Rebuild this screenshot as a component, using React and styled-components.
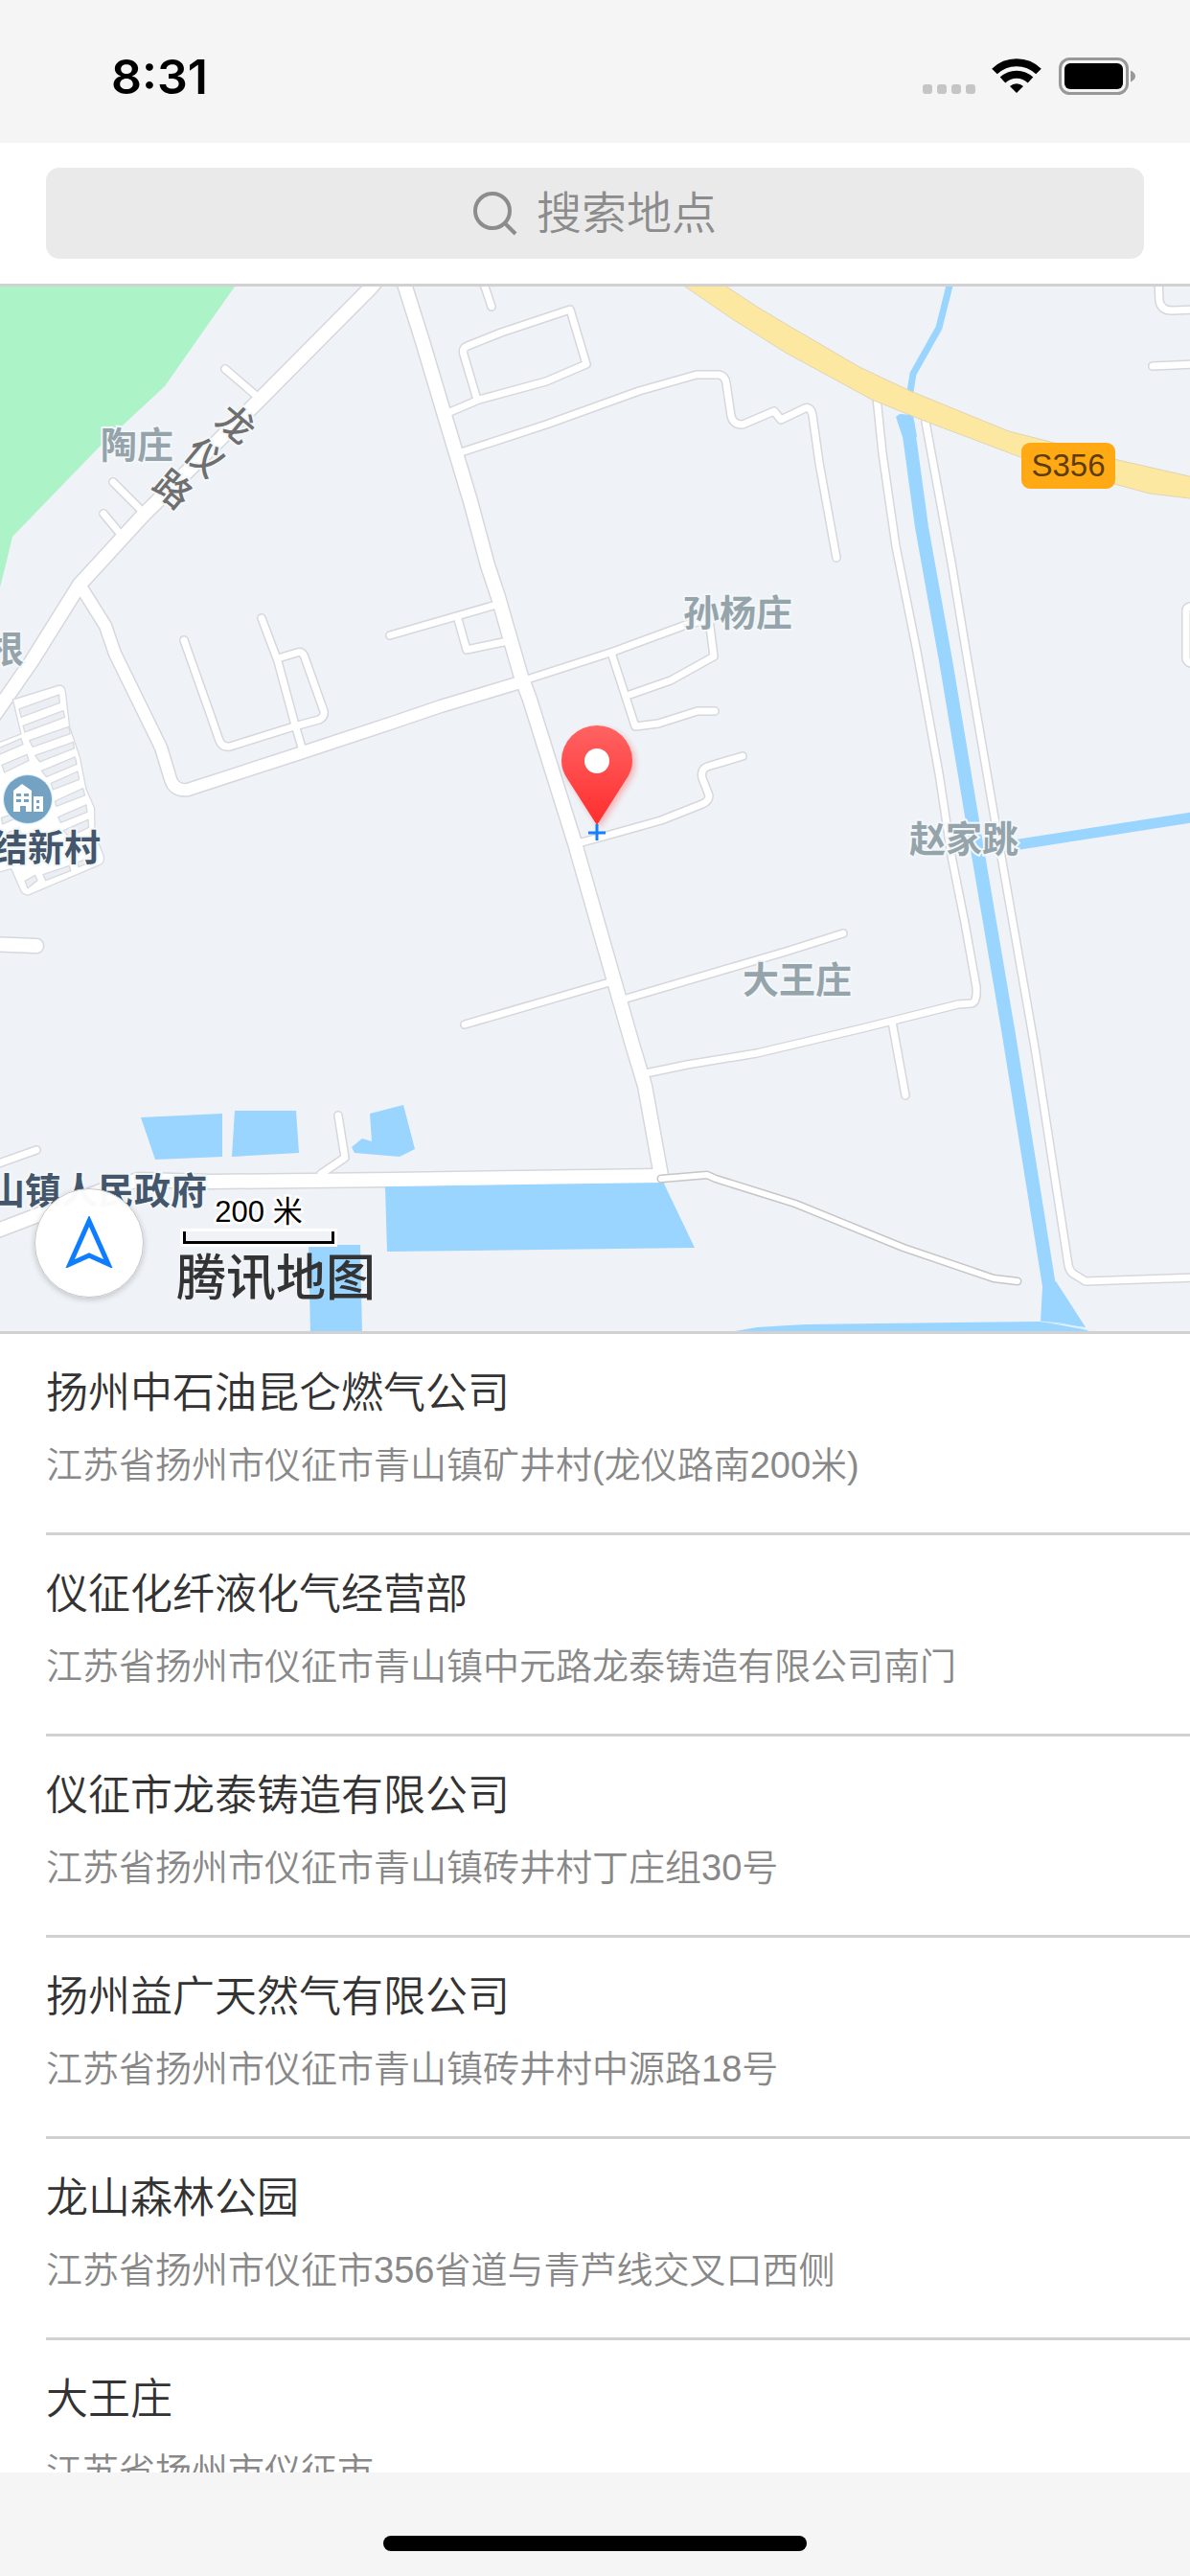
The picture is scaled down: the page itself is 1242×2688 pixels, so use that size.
import React, { useState } from "react";
import styled, { createGlobalStyle } from "styled-components";

const places = [
    { name: '扬州中石油昆仑燃气公司', address: '江苏省扬州市仪征市青山镇矿井村(龙仪路南200米)' },
    { name: '仪征化纤液化气经营部', address: '江苏省扬州市仪征市青山镇中元路龙泰铸造有限公司南门' },
    { name: '仪征市龙泰铸造有限公司', address: '江苏省扬州市仪征市青山镇砖井村丁庄组30号' },
    { name: '扬州益广天然气有限公司', address: '江苏省扬州市仪征市青山镇砖井村中源路18号' },
    { name: '龙山森林公园', address: '江苏省扬州市仪征市356省道与青芦线交叉口西侧' },
    { name: '大王庄', address: '江苏省扬州市仪征市' }
]

const villages = [
    { name: '陶庄', x: 105, y: 146 },
    { name: '根', x: -13, y: 359 },
    { name: '孙杨庄', x: 713, y: 321 },
    { name: '赵家跳', x: 949, y: 557 },
    { name: '大王庄', x: 775, y: 704 }
]

const landmarks = [
    { name: '结新村', x: -9, y: 566 },
    { name: '山镇人民政府', x: -12, y: 924 }
]

const roadName = [
    { name: '龙', x: 226, y: 124 },
    { name: '仪', x: 193, y: 159 },
    { name: '路', x: 160, y: 192 }
]

// map geometry, in screen pixels
const wideRoads = [
    'M395 290 L388 299 L270 418 L150 537 L83 610 L33 690 L-10 752',
    'M420 290 L440 353 L463 430 L476 473 L491 523 L509 590 L520 623 L543 703 L553 730 L600 880 L640 1020 L660 1090 L673 1133 L690 1227',
    'M690 1227 L410 1231 L220 1233 L145 1231 L110 1241 L0 1283 L-10 1287',
    'M-10 985 L38 987'
]

const midRoads = [
    'M83 610 L110 653 L120 682 L168 780 L178 813 Q182 826 196 824 L310 787 L410 754 L460 737 L543 712'
]

const lanes = [
    'M235 385 L270 415',
    'M118 503 L150 535',
    'M108 536 L128 560',
    'M192 668 L220 747 L229 773 Q232 780 240 779 L307 758 L333 751 Q339 748 338 742 L318 686 Q316 679 310 681 L290 687',
    'M273 645 L290 690 L307 753 L315 780',
    'M503 290 L513 320',
    'M498 417 L484 370 Q482 363 488 361 L523 347 L595 323 L612 380 L570 398 L500 417 L467 431',
    'M478 473 L570 443 L667 408 L727 391 L750 391 Q757 392 758 400 L763 434 Q765 443 775 443 L808 429 L815 438 L840 426 Q846 424 848 433 L855 483 L873 582',
    'M407 663 L518 631',
    'M478 646 L487 678 L530 669',
    'M550 709 L640 680 L716 652 L740 646 L745 685 L700 710 L657 725',
    'M638 681 L663 758 L687 755 L728 742 L746 742',
    'M775 789 L738 800 Q731 803 733 812 L740 830 Q740 836 733 839 L690 856 L633 872 L603 880',
    'M485 1069 L636 1025',
    'M650 1043 L820 993 L880 974',
    'M674 1120 L717 1111 L790 1099 L900 1073 L1000 1048 L1014 1047 Q1020 1046 1019 1030 L1007 963 L993 893 L980 807 L957 680 L935 570 L921 473 L915 415',
    'M931 1066 L945 1143',
    'M966 440 L993 587 L1010 690 L1040 865 L1080 1093 L1115 1320 Q1116 1326 1120 1329 L1133 1337 L1250 1333',
    'M353 1164 L360 1208 L335 1225',
    'M38 1200 L-10 1217',
    'M1209 290 L1210 314 Q1212 324 1223 324 L1250 323',
    'M1203 382 L1250 380',
    'M1238 637 Q1238 632 1250 632 M1238 637 L1238 686 Q1238 693 1250 693'
]

const track = 'M690 1230 L738 1226 L747 1230 L830 1256 L943 1302 L1037 1334 L1062 1337'

const ponds = [
    '147,1166 232,1162 232,1207 162,1210',
    '245,1159 309,1159 312,1203 242,1207',
    '386,1162 421,1153 433,1199 417,1207 370,1203 367,1197 378,1188 388,1191',
    '402,1238 692,1233 725,1302 404,1306',
    '322,1299 376,1299 378,1392 324,1392',
    '750,1392 790,1385 840,1382 1087,1379 1130,1387 1148,1392',
    '1088,1343 1102,1337 1133,1385 1086,1379'
]

// housing blocks of the village on the left edge, in thirds of a pixel
const blocks = [
    '60,180 185,135 187,160 66,205',
    '72,232 198,185 203,205 78,252',
    '92,278 215,235 220,257 102,298',
    '110,325 230,283 232,303 125,345',
    '130,373 235,330 240,352 145,392',
    '160,412 243,375 248,400 166,432',
    '172,468 260,428 266,450 176,484',
    '182,518 270,480 273,502 190,535',
    '198,560 276,526 278,550 215,580',
    '135,698 217,670 221,686 143,716',
    '78,718 110,700 117,716 87,740',
    '242,660 285,643 290,655 246,674',
    '-9,305 66,272 72,290 -9,325',
    '6,355 84,322 90,341 14,378',
    '4,520 40,508 44,524 8,540',
    '-9,580 60,552 66,570 -9,600'
]

const MapDrawing = () => (
    <MapCanvas viewBox="0 299 1242 1090" preserveAspectRatio="xMidYMid slice" aria-hidden="true">
        <polygon points="0,290 251,290 245,299 207,353 172,403 130,442 103,467 13,560 7,585 0,613" fill="#adf3c8" />
        <g fill="none" stroke="#d5d7dc" strokeLinecap="round" strokeLinejoin="round">
            {wideRoads.map((d) => <path key={d} d={d} strokeWidth="17" />)}
            {midRoads.map((d) => <path key={d} d={d} strokeWidth="15" />)}
            {lanes.map((d) => <path key={d} d={d} strokeWidth="10" />)}
        </g>
        <g fill="#99d5ff">
            {ponds.map((points) => <polygon key={points} points={points} />)}
            <polygon points="935,435 939,432 953,433 957,456 942,456" />
        </g>
        <g fill="none" stroke="#99d5ff">
            <path d="M993 290 L980 342 L953 390 L949 415" strokeWidth="7" strokeLinejoin="round" />
            <path d="M947 440 L962 550 L988 695 L1015 857 L1053 1080 L1095 1342" strokeWidth="14" />
            <path d="M1045 884 L1250 852" strokeWidth="11" />
        </g>
        <path d="M1086 1379 L1108 1381 L1135 1387" fill="none" stroke="#d5efff" strokeWidth="1" />
        <g fill="none" stroke="#fff" strokeLinecap="round" strokeLinejoin="round">
            {wideRoads.map((d) => <path key={d} d={d} strokeWidth="14" />)}
            {midRoads.map((d) => <path key={d} d={d} strokeWidth="12" />)}
            {lanes.map((d) => <path key={d} d={d} strokeWidth="7" />)}
        </g>
        <g fill="none" strokeLinecap="round" strokeLinejoin="round">
            <path d={track} stroke="#c6c6c6" strokeWidth="9" />
            <path d={track} stroke="#fff" strokeWidth="6" />
        </g>
        <path
            d="M697 287 L715 299 L763 332 L820 368 L910 417 L967 440 L1065 477 L1163 505 L1200 515 L1250 521 L1250 499 L1167 480 L1100 462 L1053 450 L950 408 L897 383 L820 338 L790 320 L740 287 Z"
            fill="#fde8a2"
            stroke="#dfd4b4"
            strokeWidth="1"
        />
        <g transform="translate(0 680) scale(0.3333)" stroke="#d8dadf" strokeWidth="4" strokeLinejoin="round">
            <path d="M40 150 L185 105 Q203 105 205 125 L218 235 L250 330 L270 430 L296 490 L297 570 L325 640 Q328 662 312 668 L90 762 Q76 764 66 750 L35 680 L-20 695 L-20 290 L66 258 Z" fill="#fff" />
            {blocks.map((points) => <polygon key={points} points={points} fill="#ebeff4" />)}
        </g>
        <circle cx="29" cy="834" r="26" fill="#d9eefa" />
        <circle cx="29" cy="834" r="25" fill="#74a2c2" />
        <path d="M14 847 V825 L23 818 L33 825 V847 H27 V841 H21 V847 Z M35 831 H45 V847 H35 Z" fill="#fff" />
        <path d="M17 828 h5 v3 h-5 z M25 828 h5 v3 h-5 z M17 834 h5 v3 h-5 z M25 834 h5 v3 h-5 z M38 835 h3 v3 h-3 z M38 841 h3 v3 h-3 z" fill="#74a2c2" />
    </MapCanvas>
)

const Pin = () => (
    <PinDrawing viewBox="0 0 92 112" aria-hidden="true">
        <defs>
            <linearGradient id="pinFill" x1="0" y1="0" x2="0" y2="1">
                <stop offset="0" stopColor="#ff6363" />
                <stop offset="1" stopColor="#ff2d2d" />
            </linearGradient>
        </defs>
        <path className="body" d="M46 88 L16 41 Q9 31 9 21 A37 37 0 0 1 83 21 Q83 31 76 41 Z" fill="url(#pinFill)" />
        <circle cx="46" cy="21" r="13" fill="#fff" />
        <path d="M46 87 V104 M37 96 H55" stroke="#1480ff" strokeWidth="3" />
    </PinDrawing>
)

const StatusIcons = () => (
    <StatusDrawing viewBox="0 0 222 40" aria-label="status">
        <g fill="#c5c5c5">
            <rect x="0" y="28" width="10" height="10" rx="3" />
            <rect x="15" y="28" width="10" height="10" rx="3" />
            <rect x="30" y="28" width="10" height="10" rx="3" />
            <rect x="45" y="28" width="10" height="10" rx="3" />
        </g>
        <g fill="none" stroke="#000" strokeWidth="8">
            <path d="M75 14.500 A33 33 0 0 1 121 14.500" />
            <path d="M83.500 23.500 A21 21 0 0 1 112.500 23.500" />
        </g>
        <path d="M98 37 L91 30 A10.500 10.500 0 0 1 105 30 Z" fill="#000" />
        <rect x="143.500" y="1.500" width="70" height="36" rx="10" fill="none" stroke="#989898" strokeWidth="3" />
        <rect x="148" y="6" width="61" height="27" rx="6" fill="#000" />
        <path d="M217 13.500 Q222 16 222 19.500 Q222 23 217 25.500 Z" fill="#989898" />
    </StatusDrawing>
)

const App = () => {

    const [keyword, setKeyword] = useState('')

    return (
        <Screen>
            <GlobalStyle />
            <StatusBar>
                <Clock>8:31</Clock>
                <StatusIcons />
            </StatusBar>
            <SearchBar>
                <SearchField>
                    <SearchIcon viewBox="0 0 46 46" aria-hidden="true">
                        <circle cx="20" cy="20" r="18" />
                        <path d="M33 33 L44 44" />
                    </SearchIcon>
                    <SearchInput
                        aria-label="搜索地点"
                        placeholder="搜索地点"
                        value={keyword}
                        onChange={e => setKeyword(e.target.value)}
                    />
                </SearchField>
            </SearchBar>
            <MapArea>
                <MapDrawing />
                {villages.map((label) =>
                    <MapLabel key={label.name} $x={label.x} $y={label.y}>{label.name}</MapLabel>
                )}
                {landmarks.map((label) =>
                    <Landmark key={label.name} $x={label.x} $y={label.y}>{label.name}</Landmark>
                )}
                {roadName.map((label) =>
                    <RoadLabel key={label.name} $x={label.x} $y={label.y}>{label.name}</RoadLabel>
                )}
                <RoadBadge>S356</RoadBadge>
                <Pin />
                <LocateButton aria-label="定位">
                    <svg viewBox="0 0 50 54" width="50" height="54" aria-hidden="true">
                        <path d="M25 5 L5 50 L25 41 L45 50 Z" fill="none" stroke="#0f7dff" strokeWidth="5" strokeLinejoin="miter" />
                    </svg>
                </LocateButton>
                <MapCredits>
                    <ScaleText>200 米</ScaleText>
                    <ScaleBar />
                    <MapBrand>腾讯地图</MapBrand>
                </MapCredits>
            </MapArea>
            <PlaceList>
                {places.map((place) =>
                    <PlaceItem key={place.name}>
                        <PlaceButton>
                            <PlaceName>{place.name}</PlaceName>
                            <PlaceAddress>{place.address}</PlaceAddress>
                        </PlaceButton>
                    </PlaceItem>
                )}
            </PlaceList>
            <HomeBar>
                <HomeIndicator />
            </HomeBar>
        </Screen>
    )
}

export default App

const GlobalStyle = createGlobalStyle`
    * {
        box-sizing: border-box;
    }
    body {
        margin: 0;
        background: white;
        font-family: "Liberation Sans", "Noto Sans CJK SC", sans-serif;
    }
    button, input {
        font-family: inherit;
    }
`

const Screen = styled.div`
    height: 100vh;
    display: flex;
    flex-direction: column;
    overflow: hidden;
`

const StatusBar = styled.header`
    flex: none;
    height: 149px;
    padding: 10px 57px 0 116px;
    display: flex;
    align-items: center;
    justify-content: space-between;
    background: #f5f5f5;
`

const Clock = styled.div`
    font-family: Inter, sans-serif;
    font-size: 50px;
    line-height: 60px;
    font-weight: 600;
    color: black;
`

const StatusDrawing = styled.svg`
    width: 222px;
    height: 40px;
`

const SearchBar = styled.div`
    flex: none;
    padding: 26px 48px;
`

const SearchField = styled.label`
    height: 95px;
    display: flex;
    align-items: center;
    justify-content: center;
    gap: 20px;
    border-radius: 14px;
    background: #eaeaea;
`

const SearchIcon = styled.svg`
    width: 46px;
    height: 46px;
    fill: none;
    stroke: #8c8c8c;
    stroke-width: 4px;
`

const SearchInput = styled.input`
    width: 188px;
    padding: 0;
    border: none;
    outline: none;
    background: none;
    font-size: 47px;
    line-height: 60px;
    font-weight: 350;
    color: #333333;
    &::placeholder {
        color: #8c8c8c;
        opacity: 1;
    }
`

const MapArea = styled.section`
    flex: none;
    position: relative;
    height: 1096px;
    overflow: hidden;
    border-top: 3px solid #d1d1d1;
    border-bottom: 3px solid #d1d1d1;
    background: #eff3f8;
`

const MapCanvas = styled.svg`
    display: block;
    width: 100%;
    height: 100%;
`

const MapLabel = styled.div`
    position: absolute;
    left: ${props => props.$x}px;
    top: ${props => props.$y}px;
    font-size: 38px;
    line-height: 40px;
    font-weight: 700;
    white-space: nowrap;
    color: #95a4aa;
    -webkit-text-stroke: 4px #f3f7fa;
    paint-order: stroke fill;
`

const Landmark = styled(MapLabel)`
    color: #44566b;
`

const RoadLabel = styled(MapLabel)`
    width: 40px;
    text-align: center;
    font-weight: 500;
    color: #6f6f6f;
    transform: rotate(40deg);
`

const RoadBadge = styled.div`
    position: absolute;
    left: 1066px;
    top: 163px;
    width: 98px;
    border-radius: 9px;
    background: #ffa914;
    text-align: center;
    font-size: 33px;
    line-height: 48px;
    color: #5e3c08;
`

const PinDrawing = styled.svg`
    position: absolute;
    left: calc(50% - 44px);
    top: 474px;
    width: 92px;
    height: 112px;
    overflow: visible;
    .body {
        filter: drop-shadow(3px 3px 3px rgba(255, 80, 80, .4));
    }
`

const LocateButton = styled.button`
    position: absolute;
    left: 36px;
    bottom: 35px;
    width: 114px;
    height: 114px;
    padding: 0 0 2px;
    display: flex;
    align-items: center;
    justify-content: center;
    border: 1px solid #c8c8c8;
    border-radius: 50%;
    background: rgba(255, 255, 255, .97);
    box-shadow: 0 2px 6px rgba(0, 0, 0, .2);
`

const MapCredits = styled.div`
    position: absolute;
    left: 184px;
    bottom: 25px;
    display: flex;
    flex-direction: column;
    align-items: flex-start;
`

const ScaleText = styled.div`
    width: 172px;
    text-align: center;
    font-size: 31px;
    line-height: 40px;
    color: black;
    -webkit-text-stroke: 5px white;
    paint-order: stroke fill;
`

const ScaleBar = styled.div`
    width: 158px;
    height: 13px;
    margin: 0 7px 6px;
    border: 3px solid black;
    border-top: none;
    outline: 3px solid white;
`

const MapBrand = styled.div`
    font-size: 52px;
    line-height: 60px;
    font-weight: 500;
    color: #333333;
`

const PlaceList = styled.ul`
    flex: 1;
    min-height: 0;
    margin: 0;
    padding: 0;
    list-style: none;
    overflow-y: auto;
    scrollbar-width: none;
`

const PlaceItem = styled.li`
    margin-left: 48px;
    border-bottom: 3px solid #d1d1d1;
`

const PlaceButton = styled.button`
    display: block;
    width: 100%;
    padding: 32px 48px 44px 0;
    border: none;
    background: none;
    text-align: left;
    font-weight: 350;
`

const PlaceName = styled.div`
    font-size: 44px;
    line-height: 60px;
    color: #333333;
`

const PlaceAddress = styled.div`
    margin-top: 19px;
    font-size: 38px;
    line-height: 52px;
    color: #888888;
`

const HomeBar = styled.footer`
    flex: none;
    height: 108px;
    padding-top: 66px;
    background: #f5f5f5;
`

const HomeIndicator = styled.div`
    width: 442px;
    height: 16px;
    margin: 0 auto;
    border-radius: 8px;
    background: black;
`
